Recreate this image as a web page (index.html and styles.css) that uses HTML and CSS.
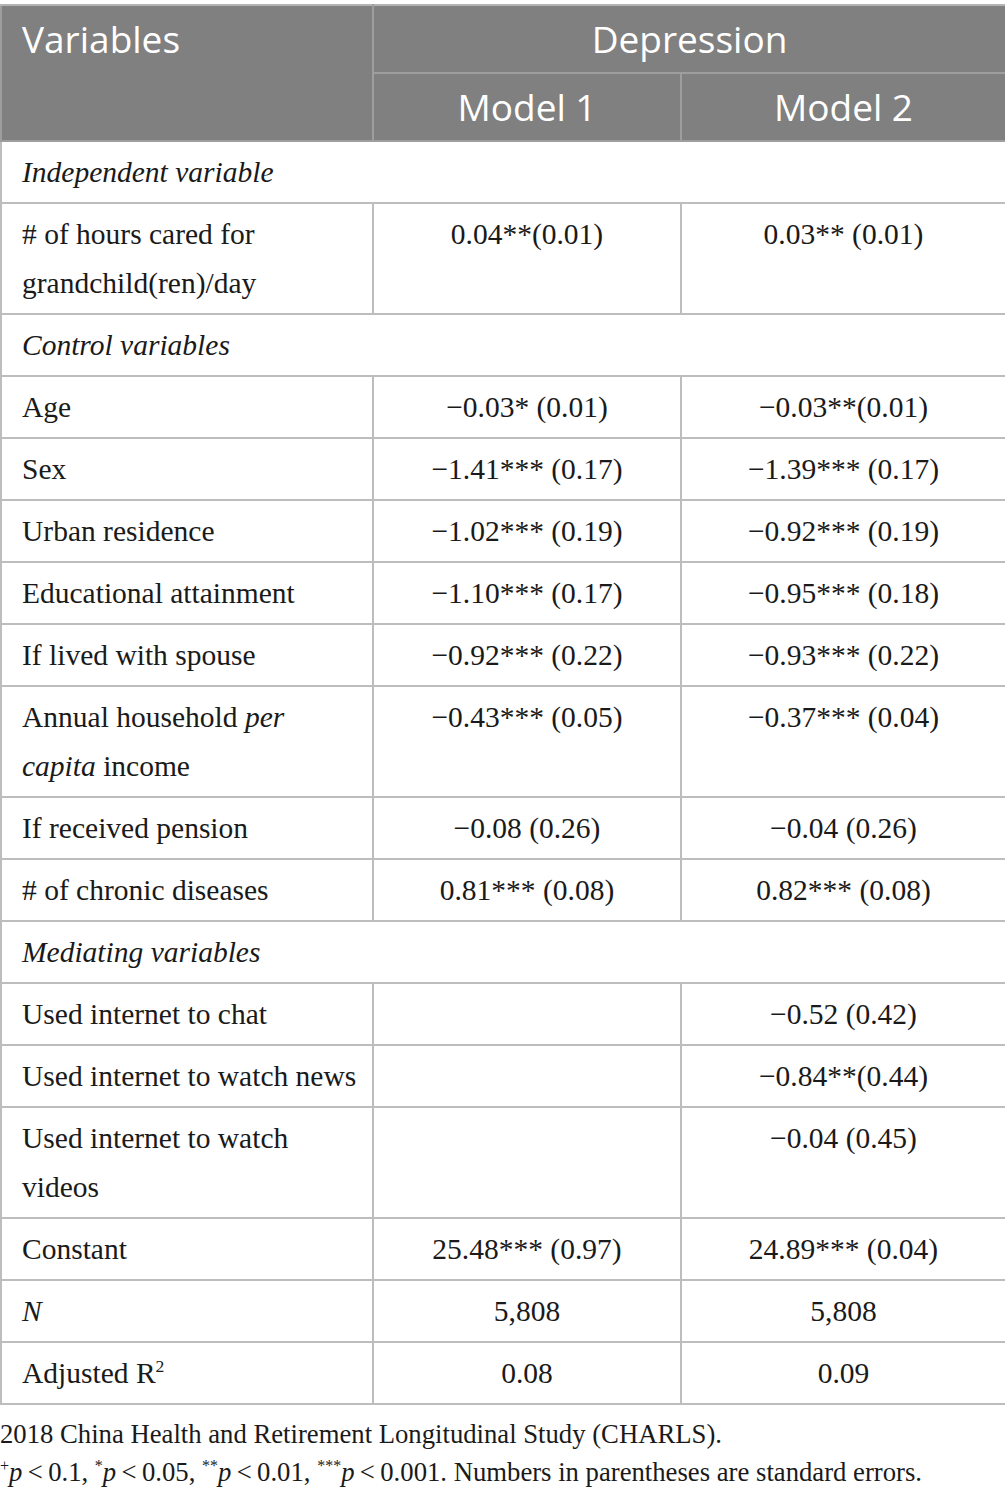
FILE: index.html
```html
<!DOCTYPE html>
<html>
<head>
<meta charset="utf-8">
<link rel="stylesheet" href="styles.css">
</head>
<body>
<div class="wrap">
<table class="tbl">
  <colgroup>
    <col class="c1"><col class="c2"><col class="c3">
  </colgroup>
  <thead>
    <tr>
      <th rowspan="2" class="hl">Variables</th>
      <th colspan="2" class="hc">Depression</th>
    </tr>
    <tr>
      <th class="hc">Model 1</th>
      <th class="hc">Model 2</th>
    </tr>
  </thead>
  <tbody>
    <tr><td colspan="3" class="sec">Independent variable</td></tr>
    <tr><td># of hours cared for grandchild(ren)/day</td><td class="n">0.04**(0.01)</td><td class="n">0.03** (0.01)</td></tr>
    <tr><td colspan="3" class="sec">Control variables</td></tr>
    <tr><td>Age</td><td class="n">−0.03* (0.01)</td><td class="n">−0.03**(0.01)</td></tr>
    <tr><td>Sex</td><td class="n">−1.41*** (0.17)</td><td class="n">−1.39*** (0.17)</td></tr>
    <tr><td>Urban residence</td><td class="n">−1.02*** (0.19)</td><td class="n">−0.92*** (0.19)</td></tr>
    <tr><td>Educational attainment</td><td class="n">−1.10*** (0.17)</td><td class="n">−0.95*** (0.18)</td></tr>
    <tr><td>If lived with spouse</td><td class="n">−0.92*** (0.22)</td><td class="n">−0.93*** (0.22)</td></tr>
    <tr><td>Annual household <em>per capita</em> income</td><td class="n">−0.43*** (0.05)</td><td class="n">−0.37*** (0.04)</td></tr>
    <tr><td>If received pension</td><td class="n">−0.08 (0.26)</td><td class="n">−0.04 (0.26)</td></tr>
    <tr><td># of chronic diseases</td><td class="n">0.81*** (0.08)</td><td class="n">0.82*** (0.08)</td></tr>
    <tr><td colspan="3" class="sec">Mediating variables</td></tr>
    <tr><td>Used internet to chat</td><td class="n"></td><td class="n">−0.52 (0.42)</td></tr>
    <tr><td>Used internet to watch news</td><td class="n"></td><td class="n">−0.84**(0.44)</td></tr>
    <tr><td>Used internet to watch videos</td><td class="n"></td><td class="n">−0.04 (0.45)</td></tr>
    <tr><td>Constant</td><td class="n">25.48*** (0.97)</td><td class="n">24.89*** (0.04)</td></tr>
    <tr><td><em>N</em></td><td class="n">5,808</td><td class="n">5,808</td></tr>
    <tr><td>Adjusted R<sup class="sup">2</sup></td><td class="n">0.08</td><td class="n">0.09</td></tr>
  </tbody>
</table>
<div class="notes">
  <p class="note">2018 China Health and Retirement Longitudinal Study (CHARLS).</p>
  <p class="note"><sup class="sup">+</sup><em>p</em>&#8201;&lt;&#8201;0.1, <sup class="sup">*</sup><em>p</em>&#8201;&lt;&#8201;0.05, <sup class="sup">**</sup><em>p</em>&#8201;&lt;&#8201;0.01, <sup class="sup">***</sup><em>p</em>&#8201;&lt;&#8201;0.001. Numbers in parentheses are standard errors.</p>
</div>
</div>
</body>
</html>
```
FILE: styles.css
```css
html, body {
  margin: 0;
  padding: 0;
  background: #ffffff;
}
.wrap {
  padding-top: 4px;
  width: 1005px;
}
.tbl {
  border-collapse: collapse;
  width: 1005px;
  table-layout: fixed;
  font-family: "Liberation Serif", "Times New Roman", serif;
  font-size: 29.5px;
  color: #1a1a1a;
}
.c1 { width: 372px; }
.c2 { width: 308px; }
.c3 { width: 325px; }
.tbl th {
  background: #7f807f;
  color: #ffffff;
  font-family: "Open Sans", "Liberation Sans", sans-serif;
  font-weight: 400;
  font-size: 37px;
  line-height: 48px;
  padding: 9px 20px 9px;
  border: 2px solid #9d9e9d;
}
.tbl thead tr:first-child th {
  border-top-color: #b4b4b4;
}
.tbl .hl {
  text-align: left;
  vertical-align: top;
}
.tbl .hc {
  text-align: center;
}
.tbl td {
  border: 2px solid #bdbdbd;
  line-height: 49px;
  padding: 6px 8px 5px 20px;
  vertical-align: top;
  text-align: left;
}
.tbl td.n {
  text-align: center;
  padding-left: 8px;
  padding-right: 8px;
}
.tbl td.sec {
  font-style: italic;
}
.sup {
  font-size: 0.6em;
  line-height: 0;
  vertical-align: 0.6em;
}
.notes {
  padding-top: 10px;
}
.note {
  margin: 0;
  font-family: "Liberation Serif", "Times New Roman", serif;
  font-size: 26.7px;
  line-height: 38px;
  color: #1a1a1a;
}
```
